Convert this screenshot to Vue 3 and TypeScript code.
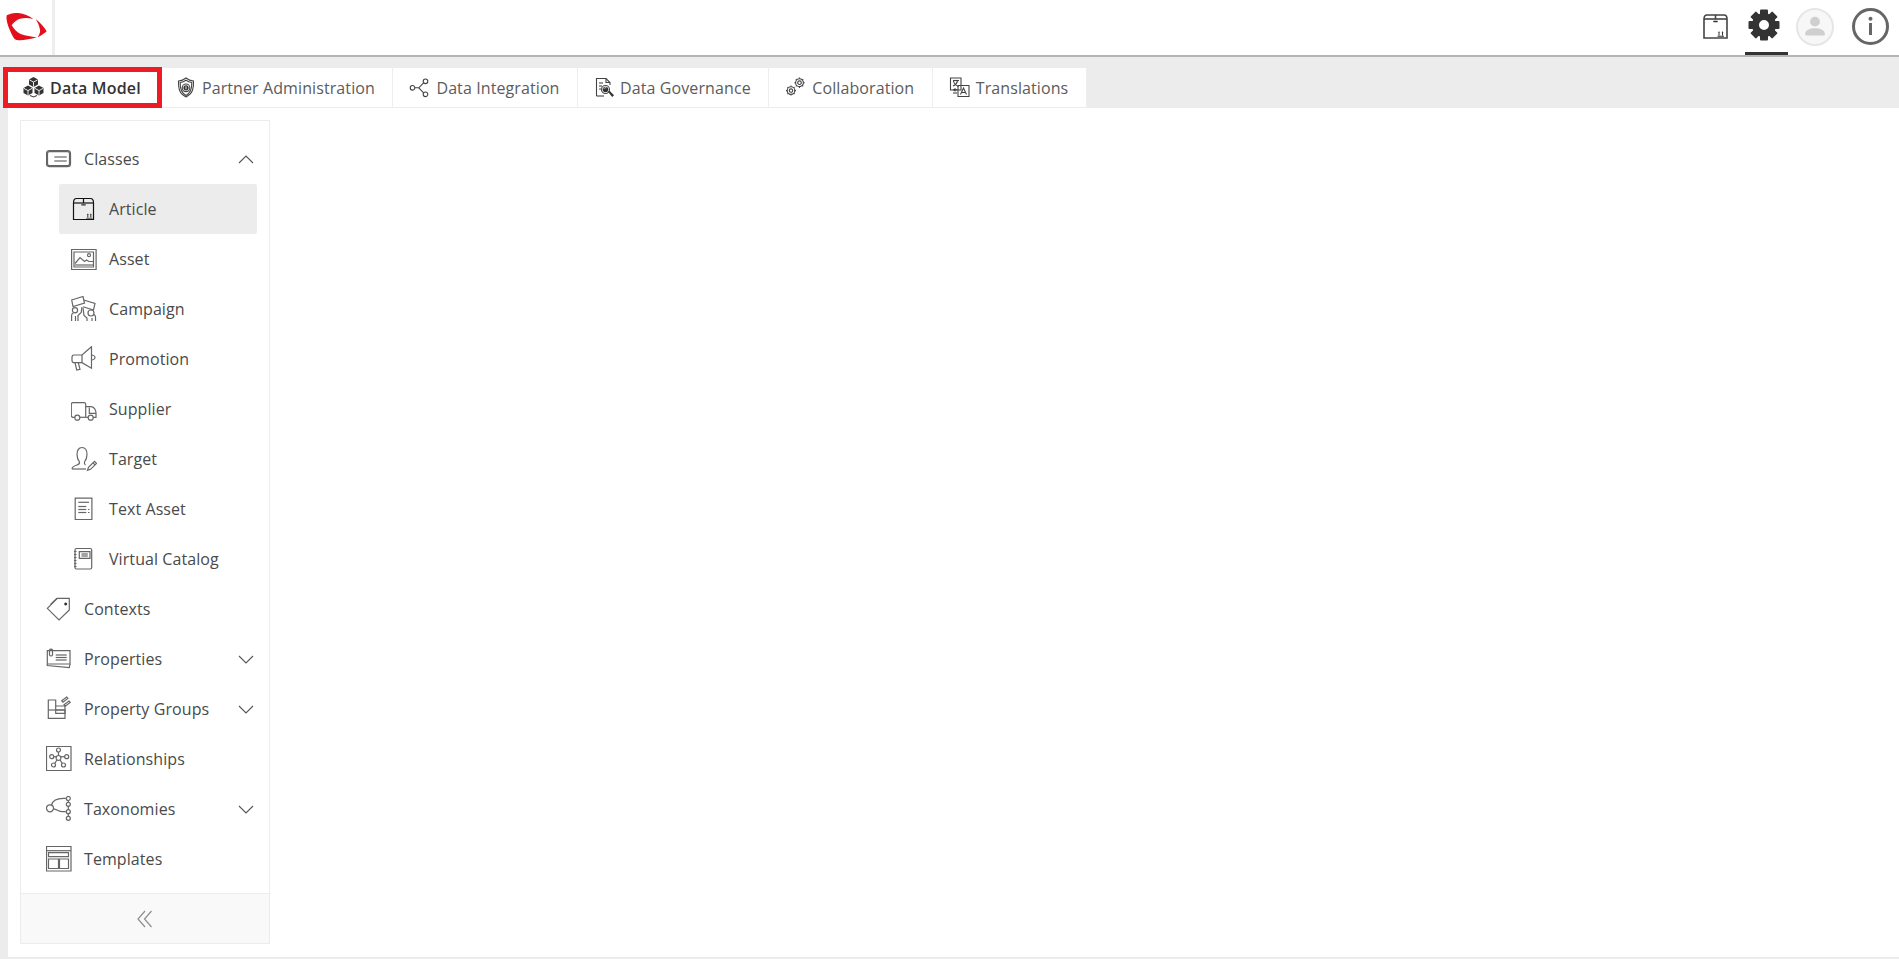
<script setup lang="ts">
type Item = { label: string; icon: string; chevron?: 'up' | 'down'; child?: boolean; active?: boolean }
type Glyph = { s?: string[]; f?: string[]; w?: string[] }

const icons: Record<string, Glyph> = {
  classes: { s: ['M3.500 4.700h18c2 0 3 1 3 3v10c0 2-1 3-3 3h-18c-2 0-3-1-3-3v-10c0-2 1-3 3-3z', 'M3.500 5.700h18c1.400 0 2 .6 2 2v10c0 1.400-.6 2-2 2h-18c-1.400 0-2-.6-2-2v-10c0-1.400.6-2 2-2z', 'M8.300 11h12.400', 'M8.300 15h12.400'] },
  box: { s: ['M2.500 7c0-2.800 1-4.500 3-4.500h14c2 0 3 1.700 3 4.500v16.500h-20z', 'M2.500 7h20', 'M12.500 2.500V7'], f: ['M10.300 8.200h4.400v1.300h-4.400z', 'M16.300 18.200h1v3.400h-1z', 'M19.300 18.200h1v3.400h-1z', 'M15.300 21.800h6.200v.8h-6.200z', 'M15.800 18.700l1-1.300 1 1.300z', 'M18.800 18.700l1-1.300 1 1.300z'] },
  asset: { s: ['M.6 3.500h24.500v20H.6z', 'M3 6h19.500v15H3z', 'M4 17.500l5-6 4.500 4 2-1.500 2.500 1.500h4', 'M4 19h18', 'M19.500 9.200a1.500 1.500 0 1 1-3 0 1.500 1.500 0 0 1 3 0z'] },
  campaign: { s: ['M.7 4L12 .5l1.500 6.500L2 10.500z', 'M12.500 4l11.500 3.500-1.500 6.500-10.500-3.300', 'M4 11.700a2.600 2.600 0 1 1 0 5.200 2.600 2.600 0 0 1 0-5.200z', 'M.6 25v-5.500c0-1.300.7-2.200 1.900-2.700', 'M7 25v-5.500l3.200-3L11 11', 'M4.500 20v5', 'M20 14a3 3 0 1 1 0 6 3 3 0 0 1 0-6z', 'M16 25v-3l-3-2.500-1-7.500', 'M24.500 25v-4c0-1-.5-2-1.500-2.500', 'M21 25v-3'] },
  promotion: { s: ['M1 11.500c0-1.500.8-2.500 2-2.500h8l9.500-8.300v21.600L11 16.700H3c-1.200 0-2-1-2-2.500z', 'M11 9v7.700', 'M20.500 9c1.500 0 3.500 1 3.500 2.500s-2 2.500-3.500 2.500', 'M4 16.700l1.700 7.300 3.300-.7-1.700-6.600'] },
  supplier: { s: ['M14.700 21.300H9', 'M3.700 21.300H2c-1 0-1.700-.7-1.700-1.700V8.400c0-1 .7-1.700 1.700-1.700h11c1 0 1.700.7 1.700 1.700v12.900', 'M14.700 10.700h5.300c2.800 0 5 3 5 6v4.600h-2.800', 'M17.200 21.300h-2.500', 'M18.300 11.500v5.800H25', 'M6.300 19.200a2.500 2.500 0 1 1 0 5 2.500 2.500 0 0 1 0-5z', 'M19.700 19.200a2.500 2.500 0 1 1 0 5 2.500 2.500 0 0 1 0-5z'] },
  target: { s: ['M1 23c0-2 2-3 5-4 2-.7 2.800-1.500 2.500-3C7 14 6 11.500 6 8.500 6 4 8 1.500 11 1.500S16 4 16 8.500c0 3-1 5.500-2.500 7.500-.3 1.500 0 2.500 1 3', 'M1 23h14', 'M16.500 24.300l1-3 6-6 2 2-6 6z', 'M22 16.800l2 2'] },
  text: { s: ['M4.200 2.200h16.700v21.300H4.200z', 'M7.300 6.300h10.700', 'M7.300 10.500h8', 'M7.300 13.500h8', 'M7.300 16.500h8', 'M17 13.500h1.500', 'M17 16.500h1.500'] },
  catalog: { s: ['M5.500 2.500h13.700c1 0 1.500.5 1.500 1.500v17.500c0 1-.5 1.500-1.500 1.500H5.500c-1 0-1.500-.5-1.500-1.500V4c0-1 .5-1.500 1.500-1.500z', 'M8.300 5.700h10.700v6.600H8.300z', 'M10.500 8h6.300', 'M10.500 10h6.300', 'M3 5.500h2.500', 'M3 8.500h2.500', 'M3 11.500h2.500', 'M3 14.500h2.500', 'M3 17.500h2.500', 'M3 20.500h2.500'] },
  contexts: { s: ['M1.300 12.300L11.300 2.300H23.300V14L13 24z', 'M4.500 8.500L11 2.300'], f: ['M19.700 6.500a1.500 1.500 0 1 1-.01 0z'] },
  properties: { s: ['M1.300 4.700h22.700v13.300H1.300z', 'M1.300 18v1.500l22 2 .7-3.500', 'M9.700 9h11', 'M9.700 11.500h11', 'M9.700 14h11', 'M3.500 4c.5-1.300 2.500-1.300 3 0v5c-.5 1.300-2.500 1.300-3 0z'] },
  groups: { s: ['M2.300 4h7.400v6H19v12.300H2.300z', 'M9.700 10v4', 'M2.300 14H19', 'M9.700 14h9.300v3.300H9.700z', 'M15.700 4.700l5-3.700 1.200 1.500-5 3.700z', 'M18 8.700l5-3.700 1.200 1.500-5 3.700z'] },
  relationships: { s: ['M.5.500h24.500v24H.5z', 'M12.500 2a2 2 0 1 1 0 4 2 2 0 0 1 0-4z', 'M5.700 8.700a2 2 0 1 1 0 4 2 2 0 0 1 0-4z', 'M20.700 8.700a2 2 0 1 1 0 4 2 2 0 0 1 0-4z', 'M12.500 9.500a2.400 2.400 0 1 1 0 4.800 2.400 2.400 0 0 1 0-4.800z', 'M7.500 17a2 2 0 1 1 0 4 2 2 0 0 1 0-4z', 'M17.500 17a2 2 0 1 1 0 4 2 2 0 0 1 0-4z', 'M12.500 6v3.500', 'M7.700 10.700h2.500', 'M14.800 10.700h3.900', 'M11 14l-2.300 3.300', 'M14 14l2.300 3.300'] },
  taxonomies: { s: ['M4 8.800a3.500 3.500 0 1 1 0 7 3.500 3.500 0 0 1 0-7z', 'M5.500 9c1-4 5-6.700 12-6.700h2.300', 'M7.500 12.800c3.500.3 5 2.900 9 2.900h3.300', 'M22.300 0.500a2 2 0 1 1 0 4 2 2 0 0 1 0-4z', 'M22.300 6.300a2 2 0 1 1 0 4 2 2 0 0 1 0-4z', 'M22.300 13.700a2 2 0 1 1 0 4 2 2 0 0 1 0-4z', 'M22.300 20.300a2 2 0 1 1 0 4 2 2 0 0 1 0-4z', 'M22.300 4.500v1.800', 'M22.300 10.300v3.400', 'M22.300 17.700v2.600'] },
  templates: { s: ['M.5.500h24.500v24.500H.5z', 'M.5 4.700h24.500', 'M2.500 6.700h20v4h-20z', 'M2.500 13h10v9.500h-10z', 'M13.500 13h9v9.500h-9z'] },
}

const items: Item[] = [
  { label: 'Classes', icon: 'classes', chevron: 'up' },
  { label: 'Article', icon: 'box', child: true, active: true },
  { label: 'Asset', icon: 'asset', child: true },
  { label: 'Campaign', icon: 'campaign', child: true },
  { label: 'Promotion', icon: 'promotion', child: true },
  { label: 'Supplier', icon: 'supplier', child: true },
  { label: 'Target', icon: 'target', child: true },
  { label: 'Text Asset', icon: 'text', child: true },
  { label: 'Virtual Catalog', icon: 'catalog', child: true },
  { label: 'Contexts', icon: 'contexts' },
  { label: 'Properties', icon: 'properties', chevron: 'down' },
  { label: 'Property Groups', icon: 'groups', chevron: 'down' },
  { label: 'Relationships', icon: 'relationships' },
  { label: 'Taxonomies', icon: 'taxonomies', chevron: 'down' },
  { label: 'Templates', icon: 'templates' },
]

function teethPath(cx: number, cy: number, r1: number, r2: number, n: number): string {
  let d = ''
  for (let i = 0; i < n; i++) {
    const a = (i * 2 * Math.PI) / n
    const c = Math.cos(a)
    const s = Math.sin(a)
    d += `M${(cx + r1 * c).toFixed(2)} ${(cy + r1 * s).toFixed(2)}L${(cx + r2 * c).toFixed(2)} ${(cy + r2 * s).toFixed(2)}`
  }
  return d
}

const tabIcons: Record<string, Glyph> = {
  model: {
    f: ['M10.500 0l4.500 2.500v5L10.500 10 6 7.500v-5z', 'M5 8.500l4.500 2.500v5L5 18.500.5 16v-5z', 'M16 8.500l4.500 2.500v5L16 18.500 11.500 16v-5z'],
    w: ['M6.300 2.800l4.200 2.300 4.200-2.300', 'M10.500 5.100v4.500', 'M.8 11.300L5 13.600l4.200-2.300', 'M5 13.600v4.500', 'M11.800 11.300l4.200 2.300 4.200-2.300', 'M16 13.600v4.500'],
    s: ['M7 18.500l3.500 1.500 3.500-1.500'],
  },
  partner: {
    s: ['M11 1c2.500 2 5 2.800 7.500 3 .3 7-.5 12.500-7.500 16C4 16.500 3.200 11 3.500 4c2.500-.2 5-1 7.500-3z', 'M11 3.200c2 1.400 3.700 2 5.800 2.300.2 5.600-.6 10.200-5.800 13-5.200-2.800-6-7.400-5.800-13 2.100-.3 3.800-.9 5.800-2.300z', 'M11 7a3.800 3.800 0 1 1 0 7.600A3.800 3.800 0 0 1 11 7z'],
    f: ['M11 8.200a2.600 2.600 0 1 1 0 5.200 2.600 2.600 0 0 1 0-5.200z'],
    w: ['M11 9.300v3'],
  },
  integration: { s: ['M3.500 8.500a2.300 2.300 0 1 1 0 4.600 2.300 2.300 0 0 1 0-4.600z', 'M16.500 2a2.300 2.300 0 1 1 0 4.600 2.300 2.300 0 0 1 0-4.600z', 'M16.500 15a2.300 2.300 0 1 1 0 4.600 2.300 2.300 0 0 1 0-4.600z', 'M5.800 10.800h4l4.800-5', 'M9.800 10.800l4.800 5'] },
  governance: {
    s: ['M3.500 19V1.500h9.500l4 4V8', 'M3.500 19h7.500', 'M13 1.500v4h4', 'M6 6h4', 'M6 9h3', 'M6 12h2', 'M12.500 8.500a4 4 0 1 1 0 8 4 4 0 0 1 0-8z'],
    f: ['M12.500 9.700a2.800 2.800 0 1 1 0 5.600 2.800 2.800 0 0 1 0-5.600z', 'M15 14.800l1.300-1.300 4.700 4.700-1.800 1.800z'],
    w: ['M11 11.500c.5-.7 1.500-1 2.300-.7'],
  },
  collab: {
    s: ['M14.500 1.800a3.900 3.900 0 1 1 0 7.800 3.900 3.900 0 0 1 0-7.800z', 'M14.500 3.900a1.800 1.800 0 1 1 0 3.600 1.800 1.800 0 0 1 0-3.600z', 'M6 9.800a3.800 3.800 0 1 1 0 7.600 3.800 3.800 0 0 1 0-7.600z', 'M6 11.900a1.700 1.700 0 1 1 0 3.400 1.700 1.700 0 0 1 0-3.400z', teethPath(14.5, 5.7, 3.9, 5.2, 8), teethPath(6, 13.6, 3.8, 5, 8)],
  },
  translate: { s: ['M1.500 1h10.500v12H1.500z', 'M9 8.500h11v11H9z', 'M4 3.500h6', 'M4 9c2.500-1 4-3 4.500-5', 'M4.500 4c.5 2.500 2.500 4.500 5 5.500', 'M4 16h4', 'M11.500 17.500l3-6.500 3 6.500', 'M12.500 15.500h4'], f: ['M3.500 12.800l3 2v-1.600h2v-1h-2v-1.200z'] },
}

const tabs = [
  { label: 'Data Model', icon: 'model', active: true },
  { label: 'Partner Administration', icon: 'partner' },
  { label: 'Data Integration', icon: 'integration' },
  { label: 'Data Governance', icon: 'governance' },
  { label: 'Collaboration', icon: 'collab' },
  { label: 'Translations', icon: 'translate' },
]

const teeth = [0, 45, 90, 135, 180, 225, 270, 315]
</script>

<template>
  <div class="page">
    <header class="topbar">
      <div class="brand">
        <svg class="logo" viewBox="0 0 42 29" width="42" height="29">
          <path class="logo-red" d="M.7 2.300C4 .8 8-.3 12.300 0 18 .5 23 3 27.300 6 22 4.800 18 4.800 14 5.700 10.500 6.700 7.500 9.500 5.700 12.300 8 16 11 19.500 14.700 21 20 23 25 23.500 30.700 24.300 25 26 18 27.500 12.300 27.300 10 27.300 8.300 26.300 7.300 24.300 4.500 19 2.500 14.500 1.300 10 .5 7 .2 4.500.7 2.300z" />
          <path class="logo-red" d="M29.700 6C34 9.500 38 14 40.700 18.300 38 20.500 35 22.800 31.700 24.300 33.500 21.500 34.500 19 34 16.700 33.500 13 31.500 9 29.700 6z" />
        </svg>
      </div>
      <div class="tools">
        <button class="tool box-tool" type="button" aria-label="Articles">
          <svg viewBox="0 0 25 25" width="25" height="25">
            <g class="top-ico"><path d="M1 5c0-2.800 1.200-4 3-4h17c1.800 0 3 1.200 3 4v19H1z" /><path d="M1 5h23" /><path d="M12.500 1v4" /></g>
            <path class="solid" d="M10.300 6.800h4.400v1.400h-4.400zM15.500 18h1v3.500h-1zM19 18h1v3.500h-1zM14.500 21.800h6.500v.9h-6.500zM15 18.500l1-1.300 1 1.300zM18.500 18.500l1-1.300 1 1.300z" />
          </svg>
        </button>
        <button class="tool gear-tool" type="button" aria-label="Settings">
          <svg viewBox="0 0 32 32" width="32" height="32">
            <g class="gear">
              <rect v-for="t in teeth" :key="t" x="12" y="0.500" width="8" height="8" rx="1" :transform="`rotate(${t} 16 16)`" />
            </g>
            <circle class="gear-ring" cx="16" cy="16" r="8.500" />
          </svg>
        </button>
        <div class="avatar">
          <svg viewBox="0 0 38 38">
            <circle class="avatar-bit" cx="19" cy="13" r="5.500" />
            <path class="avatar-bit" d="M8 27c0-4.500 5-6.500 11-6.500s11 2 11 6.500c0 1-.5 1.500-1.500 1.500h-19C8.500 28.500 8 28 8 27z" />
          </svg>
        </div>
        <div class="info">
          <svg viewBox="0 0 37 37" width="37" height="37">
            <circle class="info-ring" cx="18.500" cy="18.500" r="17" />
            <rect class="info-i" x="17" y="15" width="3" height="12" />
            <circle class="info-i" cx="18.500" cy="10.800" r="2" />
          </svg>
        </div>
      </div>
    </header>

    <nav class="tabstrip">
      <div v-for="tab in tabs" :key="tab.label" class="tab" :class="[`tab-${tab.icon}`, { on: tab.active }]">
        <svg class="tab-icon" viewBox="0 0 22 21" width="22" height="21">
          <path v-for="d in tabIcons[tab.icon].f" :key="d" :d="d" class="solid" />
          <path v-for="d in tabIcons[tab.icon].w" :key="d" :d="d" class="white-line" />
          <path v-for="d in tabIcons[tab.icon].s" :key="d" :d="d" class="tab-line" />
        </svg>
        <span>{{ tab.label }}</span>
      </div>
    </nav>

    <main class="content">
      <aside class="sidebar">
        <ul class="tree">
          <li v-for="item in items" :key="item.label" class="row" :class="{ child: item.child, active: item.active }">
            <svg class="row-icon" viewBox="0 0 26 26" width="26" height="26">
              <path v-for="d in icons[item.icon].s" :key="d" :d="d" class="ico" />
              <path v-for="d in icons[item.icon].f" :key="d" :d="d" class="solid" />
            </svg>
            <span class="row-label">{{ item.label }}</span>
            <svg v-if="item.chevron" class="chev" viewBox="0 0 16 9" width="16" height="9">
              <path :d="item.chevron === 'up' ? 'M1 8l7-7 7 7' : 'M1 1l7 7 7-7'" />
            </svg>
          </li>
        </ul>
        <footer class="collapse">
          <svg viewBox="0 0 16 18" width="16" height="18">
            <path d="M8 1L1 9l7 8" />
            <path d="M14.500 1L7.500 9l7 8" />
          </svg>
        </footer>
      </aside>
    </main>
  </div>
</template>

<style scoped>
.page {
  height: 959px;
  display: flex;
  flex-direction: column;
  background: #ececec;
  font-family: "Open Sans", "Liberation Sans", sans-serif;
  font-size: 16px;
  letter-spacing: 0.08px;
  color: #4a4a4a;
  overflow: hidden;
}
.topbar {
  height: 55px;
  flex: none;
  display: flex;
  justify-content: space-between;
  background: #fff;
  border-bottom: 2px solid #b4b4b4;
}
.brand {
  width: 46px;
  border-right: 3px solid #eeeeee;
  padding: 13px 0 0 6px;
}
.logo {
  display: block;
}
.logo-red {
  fill: #e30f1c;
}
.tools {
  display: flex;
  align-items: center;
  padding: 0 10px 2px 0;
}
.tool {
  background: none;
  border: 0;
  padding: 0;
  display: flex;
  align-items: center;
  justify-content: center;
}
.box-tool {
  width: 25px;
  margin-right: 17px;
}
.gear-tool {
  width: 43px;
  height: 55px;
  box-sizing: border-box;
  border-bottom: 3px solid #333;
  padding: 0 5px 2px 0;
  margin: 0 8px -2px 0;
}
.gear rect {
  fill: #333;
}
.gear-ring {
  fill: none;
  stroke: #333;
  stroke-width: 7;
}
.avatar {
  width: 38px;
  height: 38px;
  box-sizing: border-box;
  border: 2px solid #e6e6e6;
  border-radius: 50%;
  background: #f7f7f7;
  margin-right: 18px;
}
.avatar svg {
  display: block;
  width: 34px;
  height: 34px;
}
.avatar-bit {
  fill: #cfcfcf;
}
.info {
  width: 37px;
  height: 37px;
}
.info svg {
  display: block;
}
.info-ring {
  fill: none;
  stroke: #666;
  stroke-width: 3;
}
.info-i {
  fill: #666;
}
.ico {
  fill: none;
  stroke: #666;
  stroke-width: 1.2;
}
.top-ico path {
  fill: none;
  stroke: #444;
  stroke-width: 1.6;
}
.solid {
  fill: #333;
}
.tab-line {
  fill: none;
  stroke: #444;
  stroke-width: 1.1;
}
.white-line {
  fill: none;
  stroke: #fff;
  stroke-width: 0.9;
}
.tabstrip {
  flex: none;
  display: flex;
  height: 39px;
  margin: 11px 0 1px 8px;
}
.tab {
  position: relative;
  display: flex;
  align-items: center;
  gap: 5px;
  padding: 0 17.5px 0 16px;
  background: #fff;
  border-right: 1px solid #eee;
  color: #5c5c5c;
  white-space: nowrap;
  letter-spacing: 0.1px;
}
.tab-partner {
  padding-left: 13px;
}
.tab-governance {
  padding-left: 15px;
}
.tab.on {
  color: #333;
  font-weight: 600;
  letter-spacing: 0.2px;
  padding: 0 20px 0 15px;
}
.tab.on::after {
  content: "";
  position: absolute;
  left: -5px;
  right: -1px;
  top: -1px;
  bottom: -1px;
  border: 5px solid #ed1c24;
  pointer-events: none;
}
.tab-icon {
  flex: none;
}
.content {
  flex: 1;
  min-height: 0;
  margin: 0 0 2px 8px;
  background: #fff;
  padding: 12px 0 13px 12px;
  display: flex;
}
.sidebar {
  width: 250px;
  box-sizing: border-box;
  border: 1px solid #ececec;
  display: flex;
  flex-direction: column;
  background: #fff;
}
.tree {
  list-style: none;
  margin: 0;
  padding: 13px 0 0;
  flex: 1;
}
.row {
  height: 50px;
  display: flex;
  align-items: center;
  gap: 12px;
  padding: 0 15px 0 25px;
  color: #4a4a4a;
}
.row.child {
  margin: 0 12px 0 38px;
  padding: 0 0 0 12px;
  border-radius: 2px;
}
.row.active {
  background: #ececec;
}
.row.active .ico {
  stroke: #111;
}
.row-icon {
  flex: none;
}
.row-label {
  flex: 1;
  white-space: nowrap;
}
.chev {
  flex: none;
  overflow: visible;
}
.chev path {
  fill: none;
  stroke: #555;
  stroke-width: 1.1;
}
.collapse {
  flex: none;
  height: 50px;
  box-sizing: border-box;
  border-top: 1px solid #ececec;
  background: #f9f9f9;
  display: flex;
  align-items: center;
  justify-content: center;
}
.collapse path {
  fill: none;
  stroke: #8e8e8e;
  stroke-width: 1.2;
}
</style>

<style>
html,
body {
  margin: 0;
  padding: 0;
  background: #ececec;
}
</style>
